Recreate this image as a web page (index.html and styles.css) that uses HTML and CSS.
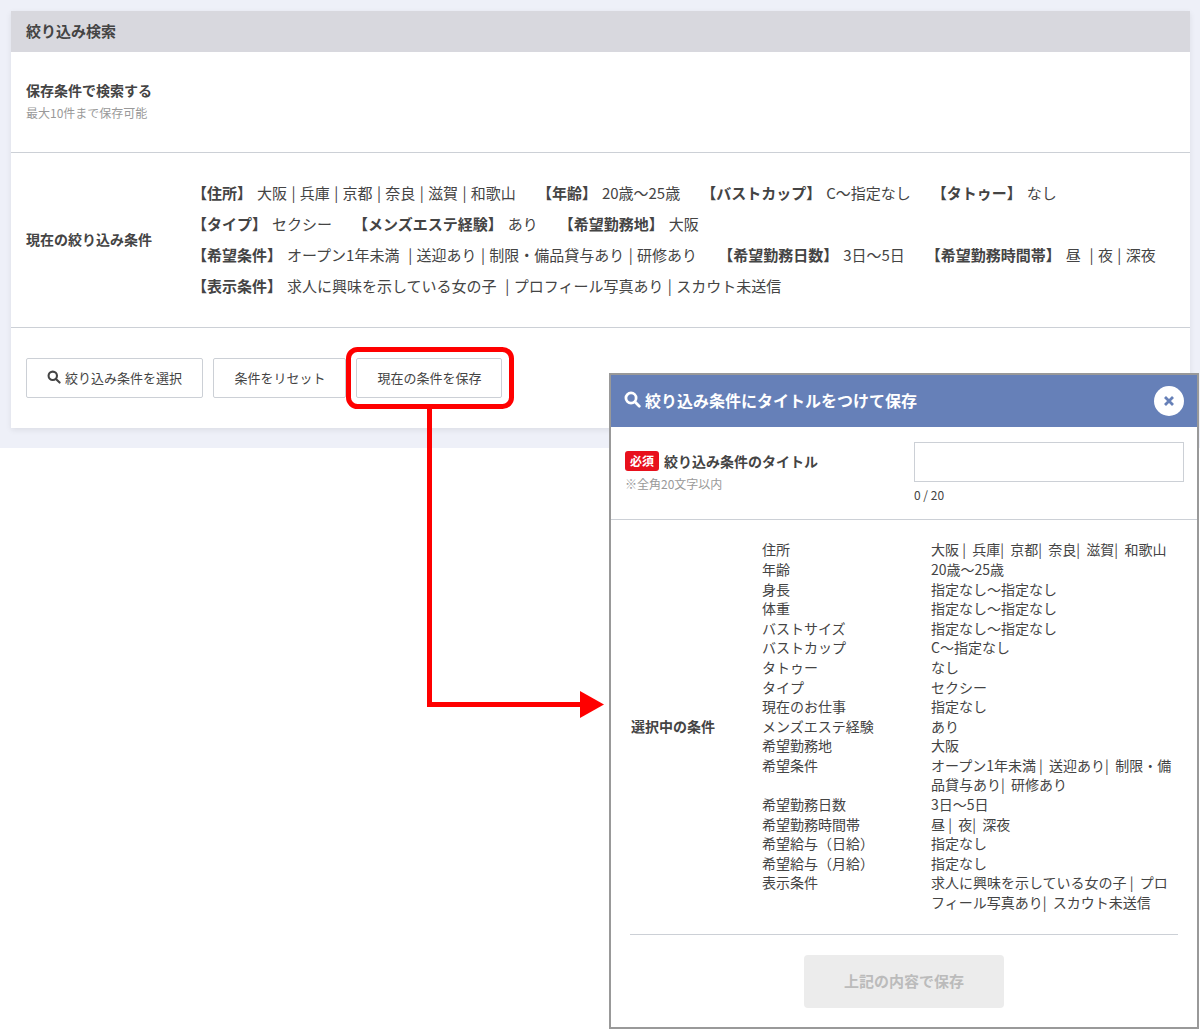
FILE: index.html
```html
<!DOCTYPE html>
<html lang="ja">
<head>
<meta charset="utf-8">
<title>絞り込み検索</title>
<link rel="stylesheet" href="styles.css">
</head>
<body>
<main class="page">
  <section class="card">
    <h1 class="card-title">絞り込み検索</h1>
    <div class="saved">
      <div class="label">保存条件で検索する</div>
      <div class="note">最大10件まで保存可能</div>
    </div>
    <div class="current">
      <div class="label current-label">現在の絞り込み条件</div>
      <div class="terms">
        <p class="line"><span class="term"><b>【住所】</b>大阪 | 兵庫 | 京都 | 奈良 | 滋賀 | 和歌山</span><span class="term"><b>【年齢】</b>20歳〜25歳</span><span class="term"><b>【バストカップ】</b>C〜指定なし</span><span class="term"><b>【タトゥー】</b>なし</span></p>
        <p class="line"><span class="term"><b>【タイプ】</b>セクシー</span><span class="term"><b>【メンズエステ経験】</b>あり</span><span class="term"><b>【希望勤務地】</b>大阪</span></p>
        <p class="line"><span class="term"><b>【希望条件】</b>オープン1年未満&nbsp; | 送迎あり | 制限・備品貸与あり | 研修あり</span><span class="term"><b>【希望勤務日数】</b>3日〜5日</span><span class="term"><b>【希望勤務時間帯】</b>昼&nbsp; | 夜 | 深夜</span></p>
        <p class="line"><span class="term"><b>【表示条件】</b>求人に興味を示している女の子&nbsp; | プロフィール写真あり | スカウト未送信</span></p>
      </div>
    </div>
    <div class="actions">
      <button class="btn btn-select" type="button"><svg class="icon-search" viewBox="0 0 16 16" aria-hidden="true"><circle cx="6.6" cy="6.6" r="4.8"/><path d="M10.2 10.2L14.4 14.4"/></svg>絞り込み条件を選択</button>
      <button class="btn btn-reset" type="button">条件をリセット</button>
      <button class="btn btn-save" type="button">現在の条件を保存</button>
    </div>
  </section>
</main>

<svg class="callout" viewBox="0 0 1200 1030" aria-hidden="true">
  <rect class="callout-box" x="348.5" y="349.5" width="163" height="57" rx="9"/>
  <path class="callout-line" d="M429.5 407V704.5H582"/>
  <path class="callout-head" d="M580 691L604 704.5L580 718Z"/>
</svg>

<aside class="modal">
  <header class="modal-head">
    <h2 class="modal-title"><svg class="icon-search icon-search-white" viewBox="0 0 16 16" aria-hidden="true"><circle cx="6.6" cy="6.6" r="4.8"/><path d="M10.2 10.2L14.4 14.4"/></svg>絞り込み条件にタイトルをつけて保存</h2>
    <span class="close"><svg viewBox="0 0 12 12" aria-hidden="true"><path d="M2 2L10 10M10 2L2 10"/></svg></span>
  </header>
  <div class="title-row">
    <div class="title-label">
      <div class="title-name"><span class="req">必須</span>絞り込み条件のタイトル</div>
      <div class="note title-note">※全角20文字以内</div>
    </div>
    <div class="title-field">
      <input class="title-input" type="text" aria-label="タイトル">
      <div class="counter">0 / 20</div>
    </div>
  </div>
  <div class="selected">
    <div class="selected-label">選択中の条件</div>
    <dl class="cond">
      <dt>住所</dt><dd>大阪 |&nbsp;&nbsp;兵庫|&nbsp;&nbsp;京都|&nbsp;&nbsp;奈良|&nbsp;&nbsp;滋賀|&nbsp;&nbsp;和歌山</dd>
      <dt>年齢</dt><dd>20歳〜25歳</dd>
      <dt>身長</dt><dd>指定なし〜指定なし</dd>
      <dt>体重</dt><dd>指定なし〜指定なし</dd>
      <dt>バストサイズ</dt><dd>指定なし〜指定なし</dd>
      <dt>バストカップ</dt><dd>C〜指定なし</dd>
      <dt>タトゥー</dt><dd>なし</dd>
      <dt>タイプ</dt><dd>セクシー</dd>
      <dt>現在のお仕事</dt><dd>指定なし</dd>
      <dt>メンズエステ経験</dt><dd>あり</dd>
      <dt>希望勤務地</dt><dd>大阪</dd>
      <dt>希望条件</dt><dd>オープン1年未満 |&nbsp;&nbsp;送迎あり|&nbsp;&nbsp;制限・備品貸与あり|&nbsp;&nbsp;研修あり</dd>
      <dt>希望勤務日数</dt><dd>3日〜5日</dd>
      <dt>希望勤務時間帯</dt><dd>昼 |&nbsp;&nbsp;夜|&nbsp;&nbsp;深夜</dd>
      <dt>希望給与（日給）</dt><dd>指定なし</dd>
      <dt>希望給与（月給）</dt><dd>指定なし</dd>
      <dt>表示条件</dt><dd>求人に興味を示している女の子 |&nbsp;&nbsp;プロフィール写真あり|&nbsp;&nbsp;スカウト未送信</dd>
    </dl>
  </div>
  <div class="modal-foot">
    <button class="submit" type="button" disabled>上記の内容で保存</button>
  </div>
</aside>
</body>
</html>
```
FILE: styles.css
```css
* { box-sizing: border-box; }
html, body { margin: 0; padding: 0; }
body {
  position: relative;
  height: 1030px;
  overflow: hidden;
  background: #fff;
  color: #444;
  font-family: "Noto Sans CJK JP", "Noto Sans", sans-serif;
  font-size: 14px;
}
.page {
  height: 448px;
  padding: 11px 10px 0 11px;
  background: #eef0f8;
}
.card {
  height: 417px;
  background: #fff;
  box-shadow: 0 2px 6px rgba(0, 0, 0, .08);
}
.card-title {
  margin: 0;
  height: 41px;
  padding-left: 15px;
  background: #d8d8de;
  font-size: 15px;
  font-weight: 700;
  line-height: 39px;
}
.saved {
  height: 101px;
  padding: 28px 15px 0;
  border-bottom: 1px solid #ccd0d6;
}
.label { font-weight: 700; line-height: 20px; }
.note { color: #999; font-size: 12px; line-height: 18px; }
.saved .note { margin-top: 4px; }
.current {
  display: flex;
  align-items: center;
  height: 175px;
  padding: 0 15px 2px;
  border-bottom: 1px solid #ccd0d6;
}
.current-label { width: 166px; flex: none; }
.line {
  margin: 0;
  height: 31px;
  font-size: 15px;
  line-height: 31px;
  white-space: nowrap;
  word-spacing: 1px;
}
.term { margin-right: 21px; }
.term b { margin-right: 5px; font-weight: 700; }
.actions {
  display: flex;
  gap: 10px;
  padding: 30px 15px 0;
}
.btn {
  display: flex;
  align-items: center;
  justify-content: center;
  height: 40px;
  padding: 0 0 2px;
  background: #fff;
  border: 1px solid #ccd0d6;
  border-radius: 2px;
  color: #444;
  font: inherit;
  font-size: 13px;
}
.btn-select { width: 177px; }
.btn-reset { width: 133px; padding-left: 1px; }
.btn-save { width: 146px; padding-left: 1px; }
.icon-search {
  width: 14px;
  height: 14px;
  margin-right: 4px;
  fill: none;
  stroke: #444;
  stroke-width: 2.4;
  stroke-linecap: round;
}
.icon-search-white {
  width: 17px;
  height: 17px;
  stroke: #fff;
  stroke-width: 2.6;
}
.callout {
  position: absolute;
  left: 0;
  top: 0;
  width: 1200px;
  height: 1030px;
  pointer-events: none;
}
.callout-box, .callout-line {
  fill: none;
  stroke: #f00;
  stroke-width: 5;
}
.callout-head { fill: #f00; }
.modal {
  position: absolute;
  left: 609px;
  top: 373px;
  width: 590px;
  height: 656px;
  background: #fff;
  border: 2px solid #999;
}
.modal-head {
  display: flex;
  align-items: center;
  justify-content: space-between;
  height: 52px;
  padding: 0 13px;
  background: #6680b8;
  color: #fff;
}
.modal-title {
  display: flex;
  align-items: center;
  margin: 0 0 3px;
  font-size: 16px;
  font-weight: 700;
}
.close {
  display: flex;
  align-items: center;
  justify-content: center;
  width: 30px;
  height: 30px;
  border-radius: 50%;
  background: #fff;
}
.close svg {
  width: 12px;
  height: 12px;
  fill: none;
  stroke: #6680b8;
  stroke-width: 2.8;
}
.title-row {
  display: flex;
  height: 93px;
  padding: 15px 13px 0 14px;
  border-bottom: 1px solid #ccd0d6;
}
.title-label { width: 289px; padding-top: 9px; }
.title-name {
  display: flex;
  align-items: center;
  font-weight: 700;
  line-height: 20px;
}
.req {
  width: 34px;
  height: 20px;
  margin-right: 5px;
  border-radius: 3px;
  background: #e8101c;
  color: #fff;
  font-size: 12px;
  text-align: center;
}
.title-note { margin-top: 4px; }
.title-field { flex: 1; }
.title-input {
  display: block;
  width: 100%;
  height: 40px;
  border: 1px solid #ccd0d6;
  background: #fff;
}
.counter { margin-top: 1px; font-size: 12px; line-height: 24px; }
.selected {
  display: flex;
  align-items: center;
  height: 415px;
  margin: 0 19px;
  border-bottom: 1px solid #ccd0d6;
}
.selected-label { width: 132px; padding: 0 0 2px 1px; font-weight: 700; }
.cond {
  display: grid;
  grid-template-columns: 169px 242px;
  margin: 0 0 1px;
  line-height: 19.6px;
}
.cond dt, .cond dd { margin: 0; }
.modal-foot {
  display: flex;
  justify-content: center;
  padding-top: 20px;
}
.submit {
  width: 200px;
  height: 53px;
  padding: 0 0 3px;
  border: 0;
  border-radius: 4px;
  background: #ececec;
  color: #bbb;
  font: inherit;
  font-size: 15px;
  font-weight: 700;
}
```
